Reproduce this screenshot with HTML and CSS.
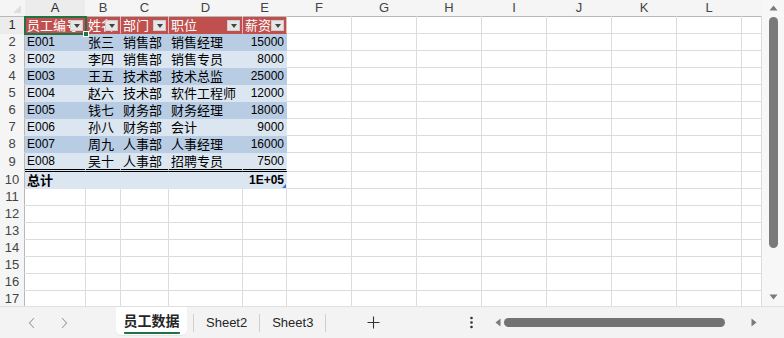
FILE: index.html
```html
<!DOCTYPE html>
<html lang="zh">
<head>
<meta charset="utf-8">
<title>员工数据</title>
<link rel="stylesheet" href="styles.css">
</head>
<body>
<div class="app">
  <div class="main">
    <div class="sheet">
      <table class="grid">
        <colgroup>
          <col class="c-rh"><col class="c-a"><col class="c-b"><col class="c-c"><col class="c-d"><col class="c-e">
          <col class="c-n"><col class="c-n"><col class="c-n"><col class="c-n"><col class="c-n"><col class="c-n"><col class="c-n"><col class="c-m">
        </colgroup>
        <thead>
          <tr><th class="corner"></th><th class="sel-col">A</th><th>B</th><th>C</th><th>D</th><th>E</th><th>F</th><th>G</th><th>H</th><th>I</th><th>J</th><th>K</th><th>L</th><th></th></tr>
        </thead>
        <tbody>
          <tr><th class="sel-row">1</th>
            <td class="h zh">员工编号<span class="dd"></span></td>
            <td class="h zh">姓名<span class="dd"></span></td>
            <td class="h zh">部门<span class="dd"></span></td>
            <td class="h zh">职位<span class="dd"></span></td>
            <td class="h zh">薪资<span class="dd"></span></td>
            <td></td><td></td><td></td><td></td><td></td><td></td><td></td><td></td></tr>
          <tr class="dk"><th>2</th><td class="t">E001</td><td class="t zh">张三</td><td class="t zh">销售部</td><td class="t zh">销售经理</td><td class="t num">15000</td><td></td><td></td><td></td><td></td><td></td><td></td><td></td><td></td></tr>
          <tr class="lt"><th>3</th><td class="t">E002</td><td class="t zh">李四</td><td class="t zh">销售部</td><td class="t zh">销售专员</td><td class="t num">8000</td><td></td><td></td><td></td><td></td><td></td><td></td><td></td><td></td></tr>
          <tr class="dk"><th>4</th><td class="t">E003</td><td class="t zh">王五</td><td class="t zh">技术部</td><td class="t zh">技术总监</td><td class="t num">25000</td><td></td><td></td><td></td><td></td><td></td><td></td><td></td><td></td></tr>
          <tr class="lt"><th>5</th><td class="t">E004</td><td class="t zh">赵六</td><td class="t zh">技术部</td><td class="t zh">软件工程师</td><td class="t num">12000</td><td></td><td></td><td></td><td></td><td></td><td></td><td></td><td></td></tr>
          <tr class="dk"><th>6</th><td class="t">E005</td><td class="t zh">钱七</td><td class="t zh">财务部</td><td class="t zh">财务经理</td><td class="t num">18000</td><td></td><td></td><td></td><td></td><td></td><td></td><td></td><td></td></tr>
          <tr class="lt"><th>7</th><td class="t">E006</td><td class="t zh">孙八</td><td class="t zh">财务部</td><td class="t zh">会计</td><td class="t num">9000</td><td></td><td></td><td></td><td></td><td></td><td></td><td></td><td></td></tr>
          <tr class="dk"><th>8</th><td class="t">E007</td><td class="t zh">周九</td><td class="t zh">人事部</td><td class="t zh">人事经理</td><td class="t num">16000</td><td></td><td></td><td></td><td></td><td></td><td></td><td></td><td></td></tr>
          <tr class="lt last"><th>9</th><td class="t">E008</td><td class="t zh">吴十</td><td class="t zh">人事部</td><td class="t zh">招聘专员</td><td class="t num">7500</td><td></td><td></td><td></td><td></td><td></td><td></td><td></td><td></td></tr>
          <tr class="lt total"><th>10</th><td class="t zh b">总计</td><td class="t"></td><td class="t"></td><td class="t"></td><td class="t num b corner-h">1E+05</td><td></td><td></td><td></td><td></td><td></td><td></td><td></td><td></td></tr>
          <tr><th>11</th><td></td><td></td><td></td><td></td><td></td><td></td><td></td><td></td><td></td><td></td><td></td><td></td><td></td></tr>
          <tr><th>12</th><td></td><td></td><td></td><td></td><td></td><td></td><td></td><td></td><td></td><td></td><td></td><td></td><td></td></tr>
          <tr><th>13</th><td></td><td></td><td></td><td></td><td></td><td></td><td></td><td></td><td></td><td></td><td></td><td></td><td></td></tr>
          <tr><th>14</th><td></td><td></td><td></td><td></td><td></td><td></td><td></td><td></td><td></td><td></td><td></td><td></td><td></td></tr>
          <tr><th>15</th><td></td><td></td><td></td><td></td><td></td><td></td><td></td><td></td><td></td><td></td><td></td><td></td><td></td></tr>
          <tr><th>16</th><td></td><td></td><td></td><td></td><td></td><td></td><td></td><td></td><td></td><td></td><td></td><td></td><td></td></tr>
          <tr><th>17</th><td></td><td></td><td></td><td></td><td></td><td></td><td></td><td></td><td></td><td></td><td></td><td></td><td></td></tr>
        </tbody>
      </table>
      <div class="selection"><span class="handle"></span></div>
    </div>
    <div class="vscroll">
      <svg class="arr" width="9" height="6" viewBox="0 0 9 6"><path d="M4.5 0.5 L8.5 5.5 L0.5 5.5 Z" fill="#7a7a7a"/></svg>
      <div class="vthumb"></div>
      <svg class="arr down" width="9" height="6" viewBox="0 0 9 6"><path d="M0.5 0.5 L8.5 0.5 L4.5 5.5 Z" fill="#7a7a7a"/></svg>
    </div>
  </div>
  <div class="bottom">
    <div class="nav">
      <svg width="8" height="12" viewBox="0 0 8 12"><path d="M6 1 L1.5 6 L6 11" fill="none" stroke="#a0a0a0" stroke-width="1.1"/></svg>
      <svg width="8" height="12" viewBox="0 0 8 12"><path d="M2 1 L6.5 6 L2 11" fill="none" stroke="#a0a0a0" stroke-width="1.1"/></svg>
    </div>
    <div class="tabs">
      <div class="tab active"><span class="zh-tab">员工数据</span></div>
      <span class="sep first"></span>
      <div class="tab">Sheet2</div>
      <span class="sep"></span>
      <div class="tab">Sheet3</div>
      <span class="sep"></span>
    </div>
    <div class="add">
      <svg width="13" height="13" viewBox="0 0 13 13"><path d="M6.5 0.5 V12.5 M0.5 6.5 H12.5" stroke="#333" stroke-width="1.1"/></svg>
    </div>
    <div class="more">
      <svg width="3" height="13" viewBox="0 0 3 13"><circle cx="1.5" cy="2" r="1.3" fill="#333"/><circle cx="1.5" cy="6.5" r="1.3" fill="#333"/><circle cx="1.5" cy="11" r="1.3" fill="#333"/></svg>
    </div>
    <div class="hscroll">
      <svg width="6" height="9" viewBox="0 0 6 9"><path d="M0.5 4.5 L5.5 0.5 L5.5 8.5 Z" fill="#7a7a7a"/></svg>
      <div class="hthumb"></div>
      <svg width="6" height="9" viewBox="0 0 6 9"><path d="M0.5 0.5 L5.5 4.5 L0.5 8.5 Z" fill="#7a7a7a"/></svg>
    </div>
  </div>
</div>
</body>
</html>
```

FILE: styles.css
```css
* { box-sizing: border-box; }

body {
  margin: 0;
  font-family: "Liberation Sans", "Noto Sans CJK SC", sans-serif;
  background: #ffffff;
  overflow: hidden;
}

.app {
  width: 784px;
  height: 338px;
  display: flex;
  flex-direction: column;
}

.main {
  display: flex;
  height: 306px;
}

.sheet {
  position: relative;
  width: 762px;
  height: 306px;
  overflow: hidden;
}

.grid {
  table-layout: fixed;
  border-collapse: separate;
  border-spacing: 0;
  width: 762px;
}

.c-rh { width: 25px; }
.c-a { width: 61px; }
.c-b { width: 35px; }
.c-c { width: 48px; }
.c-d { width: 74px; }
.c-e { width: 44px; }
.c-n { width: 65px; }
.c-m { width: 20px; }

.grid td,
.grid th {
  height: 17px;
  padding: 0 2px;
  border-right: 1px solid #dcdcdc;
  border-bottom: 1px solid #dcdcdc;
  white-space: nowrap;
  overflow: hidden;
  font-size: 12px;
  line-height: 16px;
  font-weight: normal;
  color: #000;
  text-align: left;
  vertical-align: middle;
}

.grid thead th {
  background: #f5f5f5;
  border-right: 1px solid #f5f5f5;
  border-bottom: 1px solid #b8b8b8;
  font-size: 13px;
  color: #444;
  text-align: center;
  padding: 0;
}

.grid thead th.sel-col {
  background: #ececec;
  border-bottom: 1px solid #217346;
  color: #2b2b2b;
}

.grid thead th.corner {
  position: relative;
}
.grid thead th.corner::after {
  content: "";
  position: absolute;
  right: 3px;
  bottom: 3px;
  border-left: 8px solid transparent;
  border-bottom: 8px solid #dedede;
}

.grid tbody th {
  background: #f5f5f5;
  border-right: 1px solid #b8b8b8;
  border-bottom: 1px solid #f5f5f5;
  font-size: 13px;
  color: #444;
  text-align: center;
  padding: 0;
}

.grid tbody th.sel-row {
  background: #ececec;
  border-bottom-color: #ececec;
  border-right: 1px solid #217346;
  color: #2b2b2b;
}

.zh {
  font-family: "Noto Sans CJK SC", "Liberation Sans", sans-serif;
  font-size: 13px !important;
}

.grid td.h {
  position: relative;
  background: #c0504d;
  color: #ffffff;
  border-right-color: #e7b9b8;
  border-bottom-color: #c0504d;
  padding-left: 2px;
  text-overflow: clip;
}

.dd {
  position: absolute;
  right: 2px;
  top: 3px;
  width: 13px;
  height: 11px;
  background: #e6e6e6;
  border: 1px solid #cdcdcd;
}
.dd::after {
  content: "";
  position: absolute;
  left: 3px;
  top: 3px;
  border-left: 3px solid transparent;
  border-right: 3px solid transparent;
  border-top: 4px solid #444;
}

.dk td.t { background: #b8cce4; border-color: #b8cce4; }
.lt td.t { background: #dce6f1; border-color: #dce6f1; }

.grid td.num {
  text-align: right;
  padding-right: 2px;
}

.last td.t {
  border-bottom: 3px double #000;
}

.grid td.b {
  font-weight: bold;
}

.grid td.corner-h {
  position: relative;
}
.grid td.corner-h::after {
  content: "";
  position: absolute;
  right: 0;
  bottom: 0;
  border-left: 4px solid transparent;
  border-bottom: 4px solid #4472c4;
}

.selection {
  position: absolute;
  left: 24px;
  top: 16px;
  width: 63px;
  height: 19px;
  border: 2px solid #217346;
  pointer-events: none;
}
.handle {
  position: absolute;
  right: -4px;
  bottom: -4px;
  width: 6px;
  height: 6px;
  background: #217346;
  border: 1px solid #fff;
}

.vscroll {
  width: 22px;
  height: 306px;
  background: #f7f7f7;
  display: flex;
  flex-direction: column;
  align-items: center;
  padding: 5px 0 0 0;
}
.vscroll .arr { display: block; flex: none; }
.vthumb {
  width: 9px;
  height: 231px;
  margin-top: 6px;
  border-radius: 5px;
  background: #7a7a7a;
}
.vscroll .arr.down {
  margin-top: 46px;
}

.bottom {
  height: 32px;
  background: #f3f3f3;
  border-top: 1px solid #e0e0e0;
  display: flex;
  align-items: center;
}

.nav {
  display: flex;
  align-items: center;
  gap: 24px;
  padding-left: 28px;
  width: 116px;
}
.nav svg { display: block; }

.tabs {
  display: flex;
  align-items: center;
  height: 100%;
}

.tab {
  font-size: 13px;
  color: #262626;
  padding: 0 12px;
  line-height: 16px;
}
.tab.active {
  align-self: flex-start;
  width: 71px;
  height: 28px;
  background: #ffffff;
  border-radius: 0 0 5px 5px;
  padding: 0;
  display: flex;
  justify-content: center;
  align-items: center;
  box-shadow: 0 1px 1px rgba(0,0,0,0.06);
}
.zh-tab {
  font-family: "Noto Sans CJK SC", sans-serif;
  font-weight: bold;
  font-size: 14px;
  line-height: 18px;
  padding-bottom: 3px;
  border-bottom: 2px solid #217346;
  border-radius: 1px;
  margin-top: 2px;
}

.sep {
  width: 1px;
  height: 18px;
  background: #cfcfcf;
}
.sep.first { margin-left: 6px; }

.add {
  margin-left: 41px;
  width: 13px;
  display: flex;
}
.add svg { display: block; }

.more {
  margin-left: 90px;
  display: flex;
}
.more svg { display: block; }

.hscroll {
  margin-left: 22px;
  width: 272px;
  height: 22px;
  display: flex;
  align-items: center;
}
.hscroll svg { display: block; flex: none; }
.hthumb {
  width: 221px;
  height: 9px;
  margin-left: 3px;
  border-radius: 5px;
  background: #737373;
}
.hthumb + svg { margin-left: 26px; }
```
